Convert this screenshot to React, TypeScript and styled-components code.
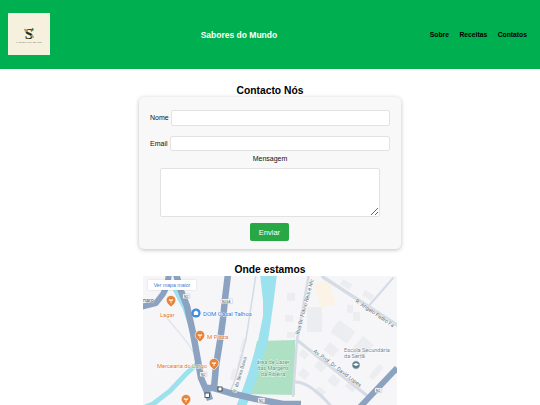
import React from 'react';
import styled, { createGlobalStyle } from 'styled-components';

const GlobalStyle = createGlobalStyle`
  html, body {
    margin: 0;
    padding: 0;
    background: #fff;
    overflow: hidden;
    font-family: "Liberation Sans", Arial, sans-serif;
  }
`;

const SPage = styled.div`
  width: 540px;
  height: 405px;
  overflow: hidden;
`;

const SHeader = styled.header`
  height: 69px;
  background-color: #00af50;
  display: flex;
  align-items: center;
  justify-content: space-between;
  padding: 0 13px 0 8px;
  box-sizing: border-box;
`;

const SLogo = styled.div`
  width: 42px;
  height: 42px;
  background-color: #f6f0df;
  display: flex;
  flex-direction: column;
  align-items: center;
  justify-content: flex-end;
  padding-bottom: 11px;
  box-sizing: border-box;
  margin-top: -1px;
`;

const SLogoEmblem = styled.div`
  position: relative;
  width: 14px;
  height: 14px;
  display: flex;
  justify-content: center;
`;

const SLogoMark = styled.span`
  font-family: "Liberation Serif", serif;
  font-weight: 700;
  font-size: 15px;
  line-height: 14px;
  color: #1c3320;
`;

const SLogoLeaves = styled.svg`
  position: absolute;
  top: 0;
  left: 0;
`;

const SLogoText = styled.span`
  font-family: "Liberation Serif", serif;
  font-size: 2.2px;
  line-height: 3px;
  letter-spacing: 0.25px;
  color: #3c3c30;
  white-space: nowrap;
`;

const STitle = styled.div`
  color: #fff;
  font-size: 8.5px;
  font-weight: 700;
  margin: 0 2px 0 0;
`;

const SNav = styled.nav`
  display: flex;
  gap: 10.5px;
`;

const SNavLink = styled.a`
  color: #000;
  font-size: 6.75px;
  font-weight: 700;
`;

const SMain = styled.main`
  display: flex;
  flex-direction: column;
  align-items: center;
`;

const SHeading = styled.h2<{ $top: number }>`
  margin: ${({ $top }) => $top}px 0 0;
  font-size: 10.3px;
  line-height: 12px;
  font-weight: 700;
  color: #000;
`;

const SCard = styled.form`
  width: 262px;
  height: 152px;
  box-sizing: border-box;
  padding: 13px 11px 0;
  background-color: #f8f8f8;
  border-radius: 5px;
  box-shadow: 0 1px 4px rgba(0, 0, 0, 0.25);
  display: flex;
  flex-direction: column;
  align-items: center;
`;

const SRow = styled.div<{ $bottom: number }>`
  width: 100%;
  display: flex;
  align-items: center;
  justify-content: flex-end;
  gap: 2px;
  margin-bottom: ${({ $bottom }) => $bottom}px;
`;

const SLabel = styled.label`
  font-size: 7px;
  line-height: 8px;
  color: #111;
`;

const SInput = styled.input<{ $width: number; $height: number }>`
  width: ${({ $width }) => $width}px;
  height: ${({ $height }) => $height}px;
  box-sizing: border-box;
  padding: 0;
  background: #fff;
  border: 1px solid #e2e2e2;
  border-radius: 2px;
`;

const SMessageLabel = styled(SLabel)`
  margin-bottom: 5px;
`;

const STextarea = styled.textarea`
  width: 220px;
  height: 49px;
  box-sizing: border-box;
  padding: 0;
  margin: 0 0 6px;
  display: block;
  background: #fff;
  border: 1px solid #e2e2e2;
  border-radius: 2px;
`;

const SSubmit = styled.button`
  width: 39px;
  height: 18px;
  padding: 0;
  margin-right: 1px;
  background-color: #28a745;
  color: #fff;
  border: none;
  border-radius: 2px;
  font-family: inherit;
  font-size: 7.5px;
`;

const SMapFrame = styled.div`
  width: 254px;
  height: 129px;
  position: relative;
  overflow: hidden;
  background-color: #f6f6f8;
`;

const SMapLink = styled.div`
  position: absolute;
  top: 4px;
  left: 5px;
  width: 48px;
  height: 10px;
  background: #fff;
  color: #3b78d8;
  font-size: 5.2px;
  line-height: 10px;
  text-align: center;
  box-shadow: 0 0 2px rgba(0, 0, 0, 0.12);
`;

const SMapSvg = styled.svg`
  display: block;
  font-family: "Roboto", "Liberation Sans", sans-serif;

  text {
    paint-order: stroke;
    stroke: rgba(255, 255, 255, 0.85);
    stroke-width: 0.9px;
  }
`;

const ROAD = '#8ba3c0';
const MINOR = '#d5dce5';
const BLOCK = '#ecedf0';
const WATER = '#9be1ee';

// x, y, width, height, rotation
const blocks = [
  [164, 31, 15, 25, 0], [144, 17, 8, 8, 0], [142, 39, 8, 7, 0], [144, 56, 8, 6, 0],
  [204, 29, 6, 8, 0], [210, 36, 7, 9, 0], [196, 44, 20, 15, 35], [220, 60, 14, 20, 40],
  [187, 66, 12, 10, 40], [160, 73, 8, 7, 40], [176, 84, 10, 8, 40], [190, 98, 10, 9, 40],
  [207, 104, 10, 8, 40], [160, 92, 9, 8, 40], [176, 110, 9, 8, 40], [236, 88, 6, 16, 40],
  [200, 3, 11, 6, 30], [222, 14, 11, 6, 30], [100, 62, 4, 14, 15], [97, 78, 4, 12, 15],
  [90, 92, 4, 12, 15],
];

const Pin = ({ x, y, fill = '#e8843a' }: { x: number; y: number; fill?: string }) => (
  <g>
    <path
      d={`M${x} ${y + 6} L${x - 3.5} ${y + 2.5} A4.8 4.8 0 1 1 ${x + 3.5} ${y + 2.5} Z`}
      fill={fill}
      stroke="#fff"
      strokeWidth="0.6"
    />
    <path
      d={`M${x - 1.6} ${y - 2} V${y - 0.5} H${x + 1.6} V${y - 2} M${x} ${y - 2} V${y + 2.2}`}
      stroke="#fff"
      strokeWidth="0.8"
      fill="none"
    />
  </g>
);

const Shield = ({ x, y, label }: { x: number; y: number; label: string }) => (
  <g>
    <rect x={x} y={y} width={label.length * 2.4 + 2} height="4.6" rx="0.5" fill="#fff" stroke="#a9b4c2" strokeWidth="0.4" />
    <text x={x + 1} y={y + 3.7} fontSize="3.6" fill="#444" style={{ stroke: 'none' }}>{label}</text>
  </g>
);

const MapDrawing = () => (
  <SMapSvg width="254" height="129" viewBox="0 0 254 129">
    {/* water and park */}
    <path d="M114 65 L152 64 L152 119 L102 118 Z" fill="#aee0c3" />
    <path
      d="M117 -2 L134 -2 L130 30 L125 65 L115 98 L108 118 L103 131 L93 131 L98 118 L105 98 L115 65 L120 40 L120 25 Z"
      fill={WATER}
    />
    <path
      d="M32 13 L42 32 L48 50 L52 65 L55 87 L43 98 L27 115 L10 128 L2 131"
      fill="none"
      stroke={WATER}
      strokeWidth="5"
    />

    {/* buildings */}
    {blocks.map(([x, y, w, h, r], i) => (
      <rect key={i} x={x} y={y} width={w} height={h} fill={BLOCK} transform={`rotate(${r} ${x} ${y})`} />
    ))}
    <path d="M170 9 L186 3 L193 28 L178 32 Z" fill="#faf3e6" />

    {/* minor streets */}
    <g fill="none" stroke={MINOR} strokeLinecap="round">
      <path d="M180 1 L254 49" strokeWidth="3.5" />
      <path d="M154 64 L227 122" strokeWidth="3" />
      <path d="M166 -2 L154 64 L150 120" strokeWidth="2.5" />
      <path d="M152 106 C160 106 172 112 187 129" strokeWidth="3" />
      <path d="M224 32 L250 2" strokeWidth="2" />
      <path d="M113 -2 L110 18 L103 63 L92 104 L87 116" strokeWidth="1.6" />
      <path d="M24 42 L44 66 L54 82" strokeWidth="1.2" stroke="#dfe3e8" />
    </g>

    {/* main roads */}
    <g fill="none" stroke={ROAD} strokeLinejoin="round">
      <path d="M-2 31 L13 27 L20 18 L24 10 L26 -2" strokeWidth="6" />
      <path d="M33 -2 L38 15 L44 30 L50 57 L55 85 L58 102 L65 118 L67 124" strokeWidth="6.5" />
      <path d="M85 -2 L82 23 L80 43 L77 65 L73 90 L71 112" strokeWidth="6.5" />
      <path d="M62 112 L70 112 L87 117 L113 123 L140 128 L158 128" strokeWidth="6.5" />
      <path d="M254 92 L217 131" strokeWidth="6" />
    </g>

    {/* shields */}
    <Shield x={40} y={18} label="N2" />
    <Shield x={78} y={23} label="N268" />
    <Shield x={57} y={96} label="N2" />
    <Shield x={115} y={122} label="N2" />
    <Shield x={232} y={112} label="N2" />
    <rect x="62" y="117" width="4.5" height="4.5" fill="#fff" stroke="#333" strokeWidth="0.8" />
    <rect x="75" y="111" width="4" height="4" fill="#fff" stroke="#333" strokeWidth="0.8" />

    {/* pins */}
    <Pin x={28} y={25} />
    <Pin x={57} y={60} />
    <Pin x={71} y={88} />
    <Pin x={43} y={124} />
    <circle cx="53" cy="37" r="4.6" fill="#3f8ae0" />
    <path d="M50.8 39 V36 L53 34.6 L55.2 36 V39 Z" fill="#fff" />

    {/* labels */}
    <text x="0" y="25.5" fontSize="5.5" fill="#555">naro</text>
    <text x="17" y="41" fontSize="5.8" fill="#e07b30">Lagar</text>
    <text x="60" y="40" fontSize="6" fill="#3b78d8">DOM Casal Talhos</text>
    <text x="64" y="63" fontSize="6" fill="#e07b30">M Pizza</text>
    <text x="14" y="92" fontSize="5.8" fill="#e07b30">Mercearia do Largo</text>
    <text fontSize="5" fill="#60707c" transform="translate(93 117) rotate(-73)">R. da Beira Baixa</text>
    <text fontSize="5.4" fill="#60707c" transform="translate(156 59) rotate(-75)">Rua Dr. Flávio Reis e Mc</text>
    <text fontSize="5.4" fill="#60707c" transform="translate(212 26) rotate(34)">R. Ângelo Pedro Fa</text>
    <text fontSize="5.4" fill="#60707c" transform="translate(170 76) rotate(37)">Av. Prof. Dr. David Lopes</text>
    <g fontSize="5.5" fill="#4f9a73" textAnchor="middle">
      <text x="130" y="88">área de Lazer</text>
      <text x="130" y="94">das Margens</text>
      <text x="130" y="100">da Ribeira</text>
    </g>
    <g fontSize="5.6" fill="#7a8894">
      <text x="201" y="76">Escola Secundária</text>
      <text x="201" y="82">da Sertã</text>
    </g>
    <circle cx="213" cy="89" r="4.2" fill="#5d7d8c" stroke="#fff" strokeWidth="0.8" />
    <path d="M210 88.5 L213 87 L216 88.5 L213 90 Z" fill="#fff" />
  </SMapSvg>
);

const App = () => {
  return (
    <SPage>
      <GlobalStyle />
      <SHeader>
        <SLogo>
          <SLogoEmblem>
            <SLogoMark>S</SLogoMark>
            <SLogoLeaves width="14" height="14" viewBox="0 0 14 14">
              <path d="M2 2 C4 1 5 3 5 5 C3 5 2 4 2 2 Z" fill="#b9a257" />
              <path d="M9 8 C11 8 12 9 12 11 C10 11 9 10 9 8 Z" fill="#b9a257" />
              <path d="M10 1 C12 1 12 3 11 4 C10 4 9 3 10 1 Z" fill="#47703e" />
            </SLogoLeaves>
          </SLogoEmblem>
          <SLogoText>SABORES DO MUNDO</SLogoText>
        </SLogo>
        <STitle>Sabores do Mundo</STitle>
        <SNav>
          <SNavLink>Sobre</SNavLink>
          <SNavLink>Receitas</SNavLink>
          <SNavLink>Contatos</SNavLink>
        </SNav>
      </SHeader>

      <SMain>
        <SHeading $top={16}>Contacto Nós</SHeading>
        <SCard>
          <SRow $bottom={10}>
            <SLabel htmlFor="nome">Nome</SLabel>
            <SInput id="nome" $width={220} $height={16} />
          </SRow>
          <SRow $bottom={4}>
            <SLabel htmlFor="email">Email</SLabel>
            <SInput id="email" $width={221} $height={15} />
          </SRow>
          <SMessageLabel htmlFor="mensagem">Mensagem</SMessageLabel>
          <STextarea id="mensagem" />
          <SSubmit type="button">Enviar</SSubmit>
        </SCard>

        <SHeading $top={15}>Onde estamos</SHeading>
        <SMapFrame>
          <MapDrawing />
          <SMapLink>Ver mapa maior</SMapLink>
        </SMapFrame>
      </SMain>
    </SPage>
  );
};

export default App;
